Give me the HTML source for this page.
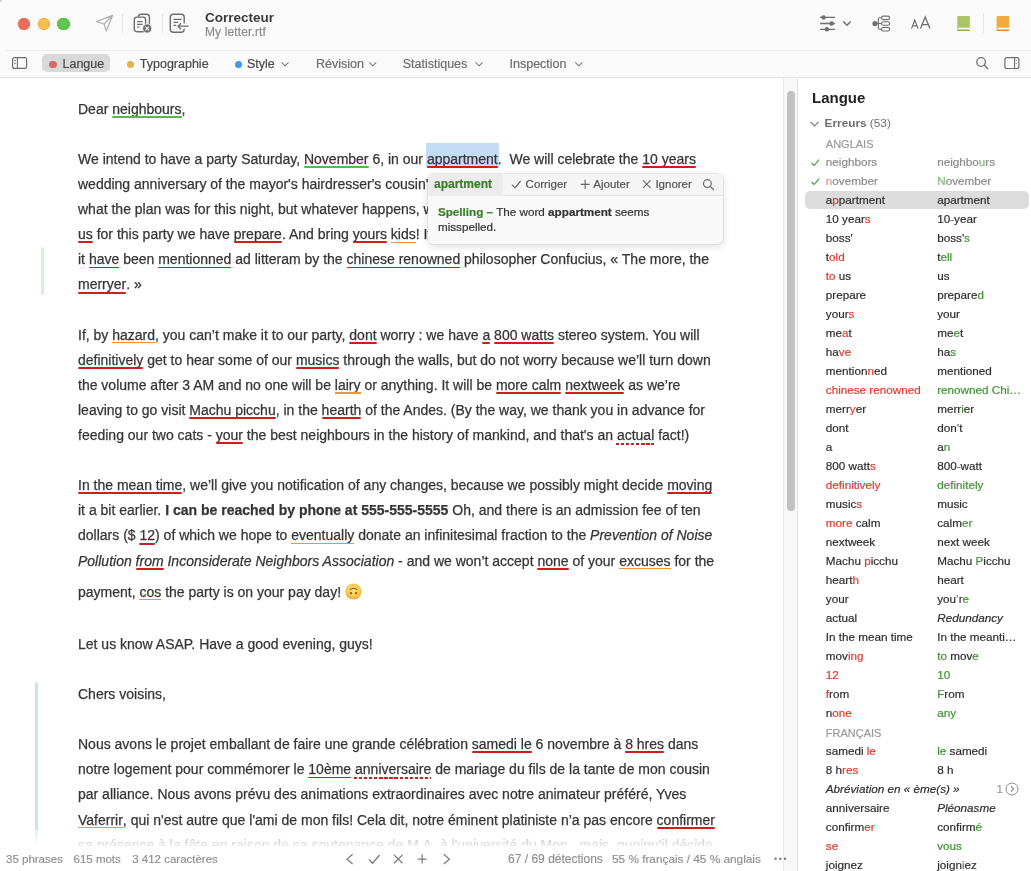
<!DOCTYPE html>
<html><head><meta charset="utf-8">
<style>
*{box-sizing:border-box}
html,body{margin:0;padding:0}
body{width:1031px;height:871px;overflow:hidden;position:relative;background:#fff;font-family:"Liberation Sans",sans-serif;color:#333}
.abs{position:absolute}
#tb{position:absolute;left:0;top:0;width:1031px;height:77px;background:#fafafa}
#tbline1{position:absolute;left:6px;top:50px;width:1025px;height:1px;background:#eeeeee}
#tbline2{position:absolute;left:0;top:77px;width:1031px;height:1px;background:#e4e4e4;box-shadow:0 1px 0 #f6f6f6}
.tl{position:absolute;top:17.5px;width:12.2px;height:12.2px;border-radius:50%}
.sep{position:absolute;width:1px;background:#e6e6e6}
.title{position:absolute;left:205px;top:9.5px;font-weight:bold;font-size:13.5px;color:#3a3a3a;line-height:16px;white-space:nowrap}
.sub{position:absolute;-webkit-text-stroke:0.2px currentColor;left:205px;top:24px;font-size:12px;letter-spacing:0.12px;color:#8c8c8c;line-height:16px;white-space:nowrap}
.tab{position:absolute;-webkit-text-stroke:0.2px currentColor;top:56px;font-size:12.5px;line-height:16px;white-space:nowrap;color:#4a4a4a}
.tab.dim{color:#6e6e6e}
.dot{position:absolute;width:7.2px;height:7.2px;border-radius:50%}
.pill{position:absolute;left:42px;top:54.3px;width:68px;height:18.2px;border-radius:5px;background:#d9d9d9}
svg{position:absolute;overflow:visible}
/* content */
#content{position:absolute;left:0;top:78px;width:783px;height:793px;background:#fff;overflow:hidden;z-index:0}
.ln{position:absolute;z-index:1;left:78px;font-size:14px;line-height:16px;white-space:pre;color:#363636;-webkit-text-stroke:0.25px currentColor}
.ln span{position:relative}
.ln .r::after,.ln .o::after,.ln .g::after,.ln .d::after{content:"";position:absolute;left:0;right:0}
.ln .r::after{top:15.3px;height:1.9px;background:#cf1d1d;border-radius:1px}
.ln .g::after{top:15.3px;height:1.9px;background:#55b94e;border-radius:1px}
.ln .o::after{top:15.5px;height:1.3px;background:#f0953a}
.ln .d::after{top:15.6px;left:-1px;height:2px;background:repeating-linear-gradient(90deg,#d01e1e 0 3.2px,transparent 3.2px 5.06px)}
.ln .b{font-weight:bold}
.ln .i{font-style:italic}
.ln .sel::before{content:"";position:absolute;left:-1px;right:-1px;top:-8px;height:25.5px;background:#c5dcf5;z-index:-1}
.emo{display:inline-block;width:19px;height:17px;position:relative;vertical-align:-3px}
.emo svg{left:0;top:0}
.fade{color:#333;opacity:1}
#fadeov{position:absolute;left:0;top:830px;width:783px;height:16px;background:linear-gradient(rgba(255,255,255,0.55),rgba(255,255,255,0.9))}
#status{position:absolute;left:0;top:846px;width:783px;height:25px;background:#fff}
.st{position:absolute;-webkit-text-stroke:0.15px currentColor;top:851px;font-size:11.5px;line-height:16px;color:#8e8e8e;white-space:nowrap}
/* scroll */
#track{position:absolute;left:783px;top:78px;width:15px;height:793px;background:#f8f8f8;border-left:1px solid #ececec;border-right:1px solid #e2e2e2}
#thumb{position:absolute;left:787px;top:91px;width:8px;height:420px;border-radius:4px;background:#c2c2c2}
/* panel */
#panel{position:absolute;left:798px;top:78px;width:233px;height:793px;background:#fff}
.ph{position:absolute;left:812px;top:88.5px;font-size:15px;font-weight:bold;color:#222;line-height:18px}
.err{position:absolute;left:824.6px;top:115.5px;font-size:11.8px;color:#6f6f6f;line-height:14px;white-space:nowrap}
.err b{font-weight:bold}
.prow{position:absolute;left:0;width:1031px;height:14px;font-size:11.7px;line-height:14px;white-space:nowrap;color:#2e2e2e;-webkit-text-stroke:0.2px currentColor}
.prow .lc{position:absolute;left:825.8px;top:0}
.prow .rc{position:absolute;left:937.2px;top:0}
.prow .it{font-style:italic}
.prow .rc i{font-style:italic}
.prow .rr{color:#e0392c}
.prow .gg{color:#3b9430}
.prow.grey{color:#8a8a8a}
.prow.grey .rr{color:#f08a84}
.prow.grey .gg{color:#79c072}
.prow.hdr{color:#9a9a9a;padding-left:825.8px;font-size:11px}
.prow .chk{left:810.5px;top:3px}
.prow .cnt{position:absolute;left:996.5px;color:#9a9a9a}
.prow .circ{left:1005px}
.selbg{position:absolute;left:805px;top:190.7px;width:223.5px;height:18.5px;border-radius:5px;background:#dcdcdc}
/* popup */
#pop{position:absolute;left:427.5px;top:173.5px;width:295.5px;height:70.5px;border-radius:5px;background:#f9f9f9;box-shadow:0 0 0 0.5px rgba(0,0,0,.12),0 2px 8px rgba(0,0,0,.14);overflow:hidden}
#pophd{position:absolute;left:0;top:0;width:100%;height:22px;background:#f5f5f5;border-bottom:1px solid #e4e4e4}
#popsel{position:absolute;left:0;top:0;width:75.5px;height:22px;background:#ececec}
.pt{position:absolute;-webkit-text-stroke:0.2px currentColor;font-size:11.5px;line-height:14px;white-space:nowrap;color:#555}
.pg{color:#397f2b;font-weight:bold}
</style></head><body>
<div id="root" style="position:absolute;left:0;top:0;width:1031px;height:871px;will-change:transform">
<div id="tb"></div>
<div id="tbline1"></div>
<div id="tbline2"></div>
<div class="tl" style="left:17.5px;background:#ed6a5e;box-shadow:inset 0 0 0 .5px #d8574b"></div>
<div class="tl" style="left:37.5px;background:#f5bf4f;box-shadow:inset 0 0 0 .5px #dea53c"></div>
<div class="tl" style="left:57.4px;background:#61c554;box-shadow:inset 0 0 0 .5px #4fae42"></div>

<!-- paper plane -->
<svg style="left:0;top:0" width="1" height="1"><path d="M112.5 15.4 L96.4 21.6 L104.1 24 L106.3 31.1 Z M112.5 15.4 L104.1 24" fill="none" stroke="#b3b3b3" stroke-width="1.3" stroke-linejoin="round"/></svg>
<div class="sep" style="left:122px;top:13.5px;height:19.5px"></div>
<!-- docs with x -->
<svg style="left:0;top:0" width="1" height="1">
<path d="M138.2 16.6 Q138.6 14.2 141 14.2 L146.6 14.2 Q149.4 14.2 149.4 17 L149.4 27.5" fill="none" stroke="#6e6e6e" stroke-width="1.4"/>
<rect x="134.3" y="17.1" width="11.3" height="14.6" rx="2.6" fill="#fafafa" stroke="#6e6e6e" stroke-width="1.4"/>
<path d="M137 21.6 H142.6 M137 24.3 H142.6 M137 27 H139.6" stroke="#6e6e6e" stroke-width="1.2"/>
<circle cx="147.2" cy="28.5" r="4.6" fill="#6e6e6e" stroke="#fafafa" stroke-width="0.8"/>
<path d="M145.4 26.7 L149 30.3 M149 26.7 L145.4 30.3" stroke="#fafafa" stroke-width="1.1"/>
</svg>
<div class="sep" style="left:162px;top:13.5px;height:19.5px"></div>
<!-- doc with arrow -->
<svg style="left:0;top:0" width="1" height="1">
<path d="M184.2 23.5 L184.2 17.3 Q184.2 14.3 181.2 14.3 L173.3 14.3 Q170.3 14.3 170.3 17.3 L170.3 29.3 Q170.3 32.3 173.3 32.3 L181.2 32.3 Q184.2 32.3 184.2 29.3 L184.2 28.8" fill="none" stroke="#6e6e6e" stroke-width="1.4"/>
<path d="M173.5 19.4 H181.6 M173.5 22.4 H178.1 M173.5 25.4 H176.2" stroke="#6e6e6e" stroke-width="1.2"/>
<path d="M178.4 26.2 H188.7 M181 23.2 L178.1 26.2 L181 29.3" fill="none" stroke="#6e6e6e" stroke-width="1.3"/>
</svg>
<div class="title">Correcteur</div>
<div class="sub">My letter.rtf</div>

<!-- right toolbar icons -->
<svg style="left:0;top:0" width="1" height="1">
<path d="M820.1 17.4 H834.9 M820.1 23.5 H834.9 M820.1 29.3 H834.9" stroke="#6e6e6e" stroke-width="1.3"/>
<circle cx="823.6" cy="17.4" r="2.2" fill="#6e6e6e"/>
<circle cx="831.6" cy="23.5" r="2.2" fill="#6e6e6e"/>
<circle cx="826.9" cy="29.3" r="2.2" fill="#6e6e6e"/>
<path d="M843.3 21.4 L847 25.2 L850.7 21.4" fill="none" stroke="#6e6e6e" stroke-width="1.4"/>
<circle cx="875" cy="23.5" r="2.6" fill="#6e6e6e"/>
<path d="M875 23.5 H881.5 M881.5 17.8 H879.6 Q878.4 17.8 878.4 19 V28 Q878.4 29.2 879.6 29.2 H881.5" fill="none" stroke="#6e6e6e" stroke-width="1.1"/>
<rect x="881.6" y="16.1" width="8" height="3.5" rx="1.6" fill="none" stroke="#6e6e6e" stroke-width="1.1"/>
<rect x="881.6" y="21.8" width="8" height="3.5" rx="1.6" fill="none" stroke="#6e6e6e" stroke-width="1.1"/>
<rect x="881.6" y="27.5" width="8" height="3.5" rx="1.6" fill="none" stroke="#6e6e6e" stroke-width="1.1"/>
<path d="M911.5 28.6 L914.8 20.2 L918.1 28.6 M912.6 25.8 H917" fill="none" stroke="#6e6e6e" stroke-width="1.2"/>
<path d="M920.5 28.6 L925.2 17 L929.9 28.6 M922.1 24.6 H928.3" fill="none" stroke="#6e6e6e" stroke-width="1.3"/>
<rect x="957.3" y="15.9" width="12.6" height="15" rx="1.4" fill="#a9c566"/>
<rect x="958.2" y="27.6" width="11.7" height="2" fill="#f4f8ea"/>
<rect x="957.3" y="29.8" width="12.6" height="1.1" fill="#8fae4c"/>
<rect x="996.6" y="15.9" width="12.6" height="15" rx="1.4" fill="#f0aa3f"/>
<rect x="997.5" y="27.6" width="11.7" height="2" fill="#fdf3e2"/>
<rect x="996.6" y="29.8" width="12.6" height="1.1" fill="#d18e2d"/>
</svg>
<div class="sep" style="left:982.5px;top:13.7px;height:19px"></div>

<!-- tab row -->
<svg style="left:0;top:0" width="1" height="1">
<rect x="12.6" y="57.6" width="14" height="10.8" rx="2" fill="none" stroke="#707070" stroke-width="1.2"/>
<path d="M17.4 57.6 V68.4 M14.1 60.5 H15.9 M14.1 63.2 H15.9" stroke="#707070" stroke-width="1.1"/>
<circle cx="981.1" cy="62" r="4.3" fill="none" stroke="#707070" stroke-width="1.3"/>
<path d="M984.2 65.1 L988 68.9" stroke="#707070" stroke-width="1.4"/>
<rect x="1004.9" y="57.6" width="14" height="10.9" rx="2" fill="none" stroke="#707070" stroke-width="1.2"/>
<path d="M1014.6 57.6 V68.5 M1016.4 60.4 V61.2 M1016.4 63.2 V64" stroke="#707070" stroke-width="1.1"/>
</svg>
<div class="pill"></div>
<div class="dot" style="left:49.4px;top:60.8px;background:#d16a69"></div>
<div class="tab" style="left:62.5px">Langue</div>
<div class="dot" style="left:126.6px;top:60.8px;background:#e2b54a"></div>
<div class="tab" style="left:139.8px">Typographie</div>
<div class="dot" style="left:234.6px;top:60.8px;background:#3d9be9"></div>
<div class="tab" style="left:247px">Style</div>
<div class="tab dim" style="left:316px">Révision</div>
<div class="tab dim" style="left:402.7px">Statistiques</div>
<div class="tab dim" style="left:509.5px">Inspection</div>
<svg style="left:0;top:0" width="1" height="1">
<path d="M281.6 62.3 L285.1 65.8 L288.6 62.3 M369.3 62.3 L372.8 65.8 L376.3 62.3 M475.6 62.3 L479.1 65.8 L482.6 62.3 M575.2 62.3 L578.7 65.8 L582.2 62.3" fill="none" stroke="#7a7a7a" stroke-width="1.1"/>
</svg>

<!-- content -->
<div id="content"></div>
<div class="abs" style="left:40.5px;top:247px;width:3px;height:48px;border-radius:1.5px;background:#d6f1d4"></div>
<div class="abs" style="left:34.6px;top:682px;width:3.2px;height:162px;border-radius:1.5px;background:#c9e3fa"></div>
<div class="ln" style="top:100.70px">Dear <span class="g">neighbours</span>,</div>
<div class="ln" style="top:150.90px">We intend to have a party Saturday, <span class="g">November</span> 6, in our <span class="r sel">appartment</span>.  We will celebrate the <span class="r">10 years</span></div>
<div class="ln" style="top:176.00px">wedding anniversary of the mayor&#x27;s hairdresser&#x27;s cousin&#x27; boss&#x27;. I told him</div>
<div class="ln" style="top:201.10px">what the plan was for this night, but whatever happens, we told to</div>
<div class="ln" style="top:226.20px"><span class="r">us</span> for this party we have <span class="r">prepare</span>. And bring <span class="r">yours</span> <span class="o">kids</span>! It will be nice to meat</div>
<div class="ln" style="top:251.30px">it <span class="r">have</span> been <span class="r">mentionned</span> ad litteram by the <span class="r">chinese renowned</span> philosopher Confucius, « The more, the</div>
<div class="ln" style="top:276.40px"><span class="r">merryer</span>. »</div>
<div class="ln" style="top:326.60px">If, by <span class="o">hazard</span>, you can’t make it to our party, <span class="r">dont</span> worry : we have <span class="r">a</span> <span class="r">800 watts</span> stereo system. You will</div>
<div class="ln" style="top:351.70px"><span class="r">definitively</span> get to hear some of our <span class="r">musics</span> through the walls, but do not worry because we’ll turn down</div>
<div class="ln" style="top:376.80px">the volume after 3 AM and no one will be <span class="o">lairy</span> or anything. It will be <span class="r">more calm</span> <span class="r">nextweek</span> as we’re</div>
<div class="ln" style="top:401.90px">leaving to go visit <span class="r">Machu picchu</span>, in the <span class="r">hearth</span> of the Andes. (By the way, we thank you in advance for</div>
<div class="ln" style="top:427.00px">feeding our two cats - <span class="r">your</span> the best neighbours in the history of mankind, and that&#x27;s an <span class="d">actual</span> fact!)</div>
<div class="ln" style="top:477.20px"><span class="r">In the mean time</span>, we’ll give you notification of any changes, because we possibly might decide <span class="r">moving</span></div>
<div class="ln" style="top:502.30px">it a bit earlier. <span class="b">I can be reached by phone at 555-555-5555</span> Oh, and there is an admission fee of ten</div>
<div class="ln" style="top:527.40px">dollars ($ <span class="r">12</span>) of which we hope to <span class="o">eventually</span> donate an infinitesimal fraction to the <span class="i">Prevention of Noise</span></div>
<div class="ln" style="top:552.50px"><span class="i">Pollution </span><span class="r i">from</span><span class="i"> Inconsiderate Neighbors Association</span> - and we won’t accept <span class="r">none</span> of your <span class="o">excuses</span> for the</div>
<div class="ln" style="top:582.60px">payment, <span class="o">cos</span> the party is on your pay day! <span class="emo"><svg width="17" height="17" viewBox="0 0 20 20"><defs><radialGradient id="eg" cx="50%" cy="40%" r="60%"><stop offset="0" stop-color="#fde27a"/><stop offset="0.7" stop-color="#f8c64a"/><stop offset="1" stop-color="#e9a23a"/></radialGradient></defs><circle cx="10" cy="10" r="9.5" fill="url(#eg)"/><path d="M6 7.5 Q10 4.5 14 7.5" stroke="#6a4012" stroke-width="1.1" fill="none" stroke-linecap="round"/><ellipse cx="7" cy="12" rx="0.95" ry="1.35" fill="#5a3410"/><ellipse cx="13" cy="12" rx="0.95" ry="1.35" fill="#5a3410"/></svg></span></div>
<div class="ln" style="top:635.80px">Let us know ASAP. Have a good evening, guys!</div>
<div class="ln" style="top:686.00px">Chers voisins,</div>
<div class="ln" style="top:736.20px">Nous avons le projet emballant de faire une grande célébration <span class="r">samedi le</span> 6 novembre à <span class="r">8 hres</span> dans</div>
<div class="ln" style="top:761.30px">notre logement pour commémorer le <span class="r">10ème</span> <span class="d">anniversaire</span> de mariage du fils de la tante de mon cousin</div>
<div class="ln" style="top:786.40px">par alliance. Nous avons prévu des animations extraordinaires avec notre animateur préféré, Yves</div>
<div class="ln" style="top:811.50px"><span class="o">Vaferrir</span>, qui n&#x27;est autre que l&#x27;ami de mon fils! Cela dit, notre éminent platiniste n’a pas encore <span class="r">confirmer</span></div>
<div class="ln fade" style="top:836.60px">sa présence à la fête en raison de sa soutenance de M.A. à l&#x27;université du Mon , mais, quoiqu&#x27;il décide</div>
<div style="position:absolute;left:0;top:0;z-index:4">
<div id="fadeov"></div>
<div id="status"></div>
<div class="st" style="left:6px">35 phrases</div>
<div class="st" style="left:73.5px">615 mots</div>
<div class="st" style="left:132.2px">3 412 caractères</div>
<div class="st" style="left:508.1px;font-size:12px">67 / 69 détections</div>
<div class="st" style="left:612px;font-size:11.8px">55 % français / 45 % anglais</div>
<svg style="left:0;top:0" width="1" height="1">
<path d="M352.6 854.3 L347 859.2 L352.6 864" fill="none" stroke="#7a7a7a" stroke-width="1.2"/>
<path d="M369 859.5 L372.5 863.2 L379.6 855" fill="none" stroke="#7a7a7a" stroke-width="1.3"/>
<path d="M394 854.9 L402.5 863.3 M402.5 854.9 L394 863.3" stroke="#7a7a7a" stroke-width="1.2"/>
<path d="M422.2 854.6 V863.6 M417.8 859.1 H426.6" stroke="#7a7a7a" stroke-width="1.2"/>
<path d="M443.8 854.3 L449.4 859.2 L443.8 864" fill="none" stroke="#7a7a7a" stroke-width="1.2"/>
<circle cx="775.6" cy="858.8" r="1.2" fill="#7a7a7a"/><circle cx="780.3" cy="858.8" r="1.2" fill="#7a7a7a"/><circle cx="785" cy="858.8" r="1.2" fill="#7a7a7a"/>
</svg>
</div>

<!-- popup -->
<div style="position:absolute;left:0;top:0;z-index:5">
<div id="pop"><div id="pophd"></div><div id="popsel"></div></div>
<div class="pt pg" style="left:434px;top:177px;font-size:12px">apartment</div>
<svg style="left:0;top:0" width="1" height="1">
<path d="M512 184.6 L515 187.8 L520.6 181" fill="none" stroke="#6a6a6a" stroke-width="1.2"/>
<path d="M585.1 179.8 V189 M580.6 184.4 H589.6" stroke="#6a6a6a" stroke-width="1.1"/>
<path d="M643 180.3 L650.5 187.8 M650.5 180.3 L643 187.8" stroke="#6a6a6a" stroke-width="1.1"/>
<circle cx="707.4" cy="183.6" r="3.9" fill="none" stroke="#6a6a6a" stroke-width="1.2"/>
<path d="M710.2 186.4 L714 190" stroke="#6a6a6a" stroke-width="1.3"/>
</svg>
<div class="pt" style="left:525.6px;top:177px">Corriger</div>
<div class="pt" style="left:593.3px;top:177px">Ajouter</div>
<div class="pt" style="left:655.4px;top:177px">Ignorer</div>
<div class="pt" style="left:437.9px;top:205px;font-size:11.7px;color:#333"><span class="pg">Spelling –</span> The word <b>appartment</b> seems</div>
<div class="pt" style="left:437.9px;top:219.5px;font-size:11.7px;color:#333">misspelled.</div>
</div>

<!-- scroll & panel -->
<div id="panel"></div>
<div id="track"></div>
<div id="thumb"></div>
<div class="ph">Langue</div>
<svg style="left:0;top:0" width="1" height="1"><path d="M810.6 121.8 L814.6 125.8 L818.6 121.8" fill="none" stroke="#7a7a7a" stroke-width="1.2"/></svg>
<div class="err"><b>Erreurs</b> (53)</div>
<div class="selbg"></div>
<div class="prow hdr" style="top:137.2px">ANGLAIS</div>
<div class="prow grey" style="top:154.90px"><svg class="chk" width="10" height="9" viewBox="0 0 10 9"><path d="M0.6 5 L3.2 7.5 L8 1.6" fill="none" stroke="#3c9a35" stroke-width="1.15"/></svg><span class="lc">neighbors</span><span class="rc">neighbo<span class="gg">u</span>rs</span></div>
<div class="prow grey" style="top:173.90px"><svg class="chk" width="10" height="9" viewBox="0 0 10 9"><path d="M0.6 5 L3.2 7.5 L8 1.6" fill="none" stroke="#3c9a35" stroke-width="1.15"/></svg><span class="lc"><span class="rr">n</span>ovember</span><span class="rc"><span class="gg">N</span>ovember</span></div>
<div class="prow selr" style="top:192.90px"><span class="lc">a<span class="rr">p</span>partment</span><span class="rc">apartment</span></div>
<div class="prow" style="top:211.90px"><span class="lc">10 year<span class="rr">s</span></span><span class="rc">10<span class="gg">-</span>year</span></div>
<div class="prow" style="top:230.90px"><span class="lc">boss'</span><span class="rc">boss'<span class="gg">s</span></span></div>
<div class="prow" style="top:249.90px"><span class="lc">t<span class="rr">old</span></span><span class="rc">t<span class="gg">ell</span></span></div>
<div class="prow" style="top:268.90px"><span class="lc"><span class="rr">to</span> us</span><span class="rc">us</span></div>
<div class="prow" style="top:287.90px"><span class="lc">prepare</span><span class="rc">prepare<span class="gg">d</span></span></div>
<div class="prow" style="top:306.90px"><span class="lc">your<span class="rr">s</span></span><span class="rc">your</span></div>
<div class="prow" style="top:325.90px"><span class="lc">me<span class="rr">a</span>t</span><span class="rc">me<span class="gg">e</span>t</span></div>
<div class="prow" style="top:344.90px"><span class="lc">ha<span class="rr">ve</span></span><span class="rc">ha<span class="gg">s</span></span></div>
<div class="prow" style="top:363.90px"><span class="lc">mention<span class="rr">n</span>ed</span><span class="rc">mentioned</span></div>
<div class="prow" style="top:382.90px"><span class="lc"><span class="rr">chinese renowned</span></span><span class="rc"><span class="gg">renowned Chi…</span></span></div>
<div class="prow" style="top:401.90px"><span class="lc">merr<span class="rr">y</span>er</span><span class="rc">merr<span class="gg">i</span>er</span></div>
<div class="prow" style="top:420.90px"><span class="lc">dont</span><span class="rc">don<span class="gg">’</span>t</span></div>
<div class="prow" style="top:439.90px"><span class="lc">a</span><span class="rc">a<span class="gg">n</span></span></div>
<div class="prow" style="top:458.90px"><span class="lc">800 watt<span class="rr">s</span></span><span class="rc">800<span class="gg">-</span>watt</span></div>
<div class="prow" style="top:477.90px"><span class="lc"><span class="rr">definitively</span></span><span class="rc"><span class="gg">definitely</span></span></div>
<div class="prow" style="top:496.90px"><span class="lc">music<span class="rr">s</span></span><span class="rc">music</span></div>
<div class="prow" style="top:515.90px"><span class="lc"><span class="rr">more</span> calm</span><span class="rc">calm<span class="gg">er</span></span></div>
<div class="prow" style="top:534.90px"><span class="lc">nextweek</span><span class="rc">next week</span></div>
<div class="prow" style="top:553.90px"><span class="lc">Machu <span class="rr">p</span>icchu</span><span class="rc">Machu <span class="gg">P</span>icchu</span></div>
<div class="prow" style="top:572.90px"><span class="lc">heart<span class="rr">h</span></span><span class="rc">heart</span></div>
<div class="prow" style="top:591.90px"><span class="lc">your</span><span class="rc">you<span class="gg">’</span>r<span class="gg">e</span></span></div>
<div class="prow" style="top:610.90px"><span class="lc">actual</span><span class="rc"><i>Redundancy</i></span></div>
<div class="prow" style="top:629.90px"><span class="lc">In the mean time</span><span class="rc">In the meanti…</span></div>
<div class="prow" style="top:648.90px"><span class="lc">mov<span class="rr">ing</span></span><span class="rc"><span class="gg">to</span> mov<span class="gg">e</span></span></div>
<div class="prow" style="top:667.90px"><span class="lc"><span class="rr">12</span></span><span class="rc"><span class="gg">10</span></span></div>
<div class="prow" style="top:686.90px"><span class="lc"><span class="rr">f</span>rom</span><span class="rc"><span class="gg">F</span>rom</span></div>
<div class="prow" style="top:705.90px"><span class="lc">n<span class="rr">one</span></span><span class="rc"><span class="gg">any</span></span></div>
<div class="prow hdr" style="top:725.50px">FRANÇAIS</div>
<div class="prow" style="top:743.90px"><span class="lc">samedi <span class="rr">le</span></span><span class="rc"><span class="gg">le</span> samedi</span></div>
<div class="prow" style="top:762.90px"><span class="lc">8 h<span class="rr">res</span></span><span class="rc">8 h</span></div>
<div class="prow" style="top:781.90px"><span class="lc it">Abréviation en « ème(s) »</span><span class="cnt">1</span><svg class="circ" style="top:0.00px" width="14" height="14" viewBox="0 0 14 14"><circle cx="7" cy="7" r="6" fill="none" stroke="#8a8a8a" stroke-width="1"/><path d="M6 4.3 L8.6 7 L6 9.7" fill="none" stroke="#8a8a8a" stroke-width="1.1"/></svg></div>
<div class="prow" style="top:800.90px"><span class="lc">anniversaire</span><span class="rc"><i>Pléonasme</i></span></div>
<div class="prow" style="top:819.90px"><span class="lc">confirm<span class="rr">er</span></span><span class="rc">confirm<span class="gg">é</span></span></div>
<div class="prow" style="top:838.90px"><span class="lc"><span class="rr">se</span></span><span class="rc"><span class="gg">vous</span></span></div>
<div class="prow" style="top:857.90px"><span class="lc">joignez</span><span class="rc">joign<span class="gg">i</span>ez</span></div>
<div class="abs" style="left:0;top:0;width:1.5px;height:1.5px;background:#d4d4d4;border-radius:0 0 1px 0"></div>
<div class="abs" style="left:0;top:869px;width:2px;height:2px;background:#b8b8b8;border-radius:0 1px 0 0"></div>
</div>
</body></html>
